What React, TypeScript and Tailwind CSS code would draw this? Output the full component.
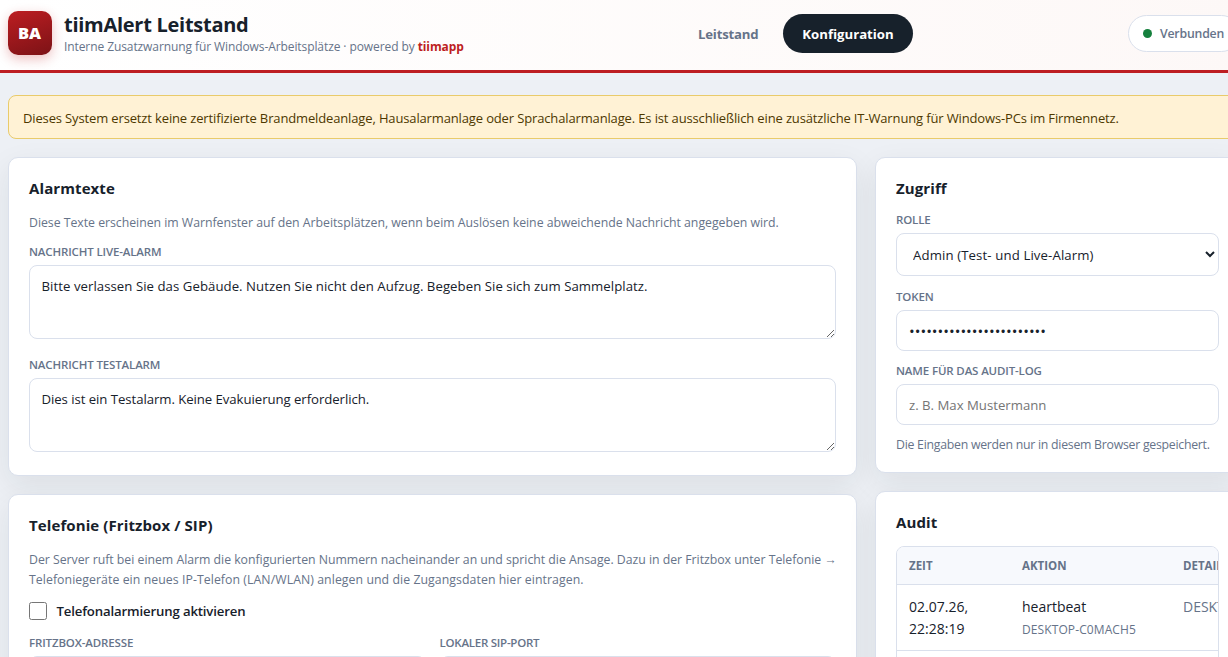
import React from 'react';
import { clsx } from 'clsx';

const FIELD = 'block w-full rounded-lg border border-[#dae0ec] bg-white text-[#17212b] outline-none';

function Card({ title, className, children }: { title: string; className?: string; children: React.ReactNode }) {
  return (
    <section
      className={clsx(
        'rounded-[10px] border border-[#dae0ec] bg-white px-5 pt-[18px] shadow-[0_10px_30px_rgba(23,33,43,0.08)]',
        className
      )}
    >
      <h2 className="h-[25px] text-[15px] leading-[24px] font-bold tracking-[0.1px] whitespace-nowrap">{title}</h2>
      {children}
    </section>
  );
}

function Label({ children, className }: { children: React.ReactNode; className?: string }) {
  return (
    <span
      className={clsx(
        'block h-[18px] text-[11.5px] leading-[17px] font-semibold tracking-[-0.14px] whitespace-nowrap text-[#667389] uppercase',
        className
      )}
    >
      {children}
    </span>
  );
}

function Header() {
  return (
    <header className="flex h-[73px] w-[1248px] items-start border-b-[3px] border-[#bd1e22] bg-linear-to-r from-white to-[#fdf8f7] pl-2">
      <div className="mt-[11px] flex size-11 items-center justify-center rounded-[10px] bg-linear-160 from-[#bd1e22] to-[#7c1216] pr-px text-[16.5px] font-extrabold text-white shadow-[0_4px_12px_rgba(189,30,34,0.28)]">
        BA
      </div>
      <div className="mt-[11px] ml-3 w-[614px] whitespace-nowrap">
        <h1 className="h-[27px] text-[20px] leading-[27px] font-bold tracking-[-0.27px]">tiimAlert Leitstand</h1>
        <p className="text-[12px] leading-[18px] tracking-[-0.09px] text-[#667389]">
          Interne Zusatzwarnung für Windows-Arbeitsplätze · powered by{' '}
          <strong className="font-bold text-[#bd1e22]">tiimapp</strong>
        </p>
      </div>
      <nav className="mt-[14px] flex h-[39px] text-[13.2px] leading-[40px] font-bold">
        <a className="w-[105px] pl-5 tracking-[-0.2px] text-[#667389]">Leitstand</a>
        <a className="w-[130px] rounded-full bg-[#17212b] text-center text-white">Konfiguration</a>
      </nav>
      <div className="mt-[15px] ml-[215px] flex h-[37px] w-28 items-center gap-2 rounded-full border border-[#dae0ec] bg-white pl-[14px] text-[12.3px] font-semibold text-[#667389]">
        <span className="size-[9px] rounded-full bg-[#15803d]" />
        <span className="pt-[2px] tracking-[-0.2px]">Verbunden</span>
      </div>
    </header>
  );
}

function AlarmTexts() {
  return (
    <Card title="Alarmtexte" className="h-[319px]">
      <p className="mt-[12px] mb-[10px] text-[12.3px] leading-[20px] tracking-[-0.03px] whitespace-nowrap text-[#667389]">
        Diese Texte erscheinen im Warnfenster auf den Arbeitsplätzen, wenn beim Auslösen keine abweichende Nachricht
        angegeben wird.
      </p>
      <Label>Nachricht Live-Alarm</Label>
      <textarea
        className={clsx(FIELD, 'mt-[4px] h-[74px] resize-y px-[11.5px] py-[9px] text-[13.2px] leading-[22px] tracking-[0.05px]')}
        defaultValue="Bitte verlassen Sie das Gebäude. Nutzen Sie nicht den Aufzug. Begeben Sie sich zum Sammelplatz."
      />
      <Label className="mt-[17px]">Nachricht Testalarm</Label>
      <textarea
        className={clsx(FIELD, 'mt-[4px] h-[74px] resize-y px-[11.5px] py-[9px] text-[13.2px] leading-[22px] tracking-[-0.06px]')}
        defaultValue="Dies ist ein Testalarm. Keine Evakuierung erforderlich."
      />
    </Card>
  );
}

function Telephony() {
  return (
    <Card title="Telefonie (Fritzbox / SIP)" className="h-[400px]">
      <p className="mt-[12px] text-[12.3px] leading-[20px] whitespace-nowrap text-[#667389]">
        <span className="tracking-[-0.025px]">
          Der Server ruft bei einem Alarm die konfigurierten Nummern nacheinander an und spricht die Ansage. Dazu in der
          Fritzbox unter Telefonie →
        </span>
        <br />
        <span className="tracking-[0.06px]">
          Telefoniegeräte ein neues IP-Telefon (LAN/WLAN) anlegen und die Zugangsdaten hier eintragen.
        </span>
      </p>
      <label className="mt-[10px] flex h-[22px] items-center gap-[9.5px] text-[13.2px] font-semibold tracking-[-0.15px]">
        <input type="checkbox" className="size-[18px]" />
        <span className="pt-[2px]">Telefonalarmierung aktivieren</span>
      </label>
      <div className="mt-[12px] grid grid-cols-2 gap-[14px]">
        <div>
          <Label>Fritzbox-Adresse</Label>
          <input className={clsx(FIELD, 'mt-[4px] h-[41px] px-3 text-[13.2px]')} />
        </div>
        <div>
          <Label className="tracking-[-0.25px]">Lokaler SIP-Port</Label>
          <input className={clsx(FIELD, 'mt-[4px] h-[41px] px-3 text-[13.2px]')} />
        </div>
      </div>
    </Card>
  );
}

function Access() {
  return (
    <Card title="Zugriff" className="h-[316px]">
      <Label className="mt-[10px]">Rolle</Label>
      <select className={clsx(FIELD, 'mt-[4px] h-[43px] px-3 text-[13.2px] tracking-[0.12px]')}>
        <option>Admin (Test- und Live-Alarm)</option>
      </select>
      <Label className="mt-[12px]">Token</Label>
      <input
        type="password"
        className={clsx(FIELD, 'mt-[4px] h-[41px] px-3 text-[15.2px]')}
        defaultValue="leitstand-admin-token-01"
      />
      <Label className="mt-[11px]">Name für das Audit-Log</Label>
      <input
        className={clsx(FIELD, 'mt-[4px] h-[41px] px-3 text-[13.2px] placeholder:text-[#757575]')}
        placeholder="z. B. Max Mustermann"
      />
      <p className="mt-[10px] text-[12.3px] leading-[20px] tracking-[-0.26px] whitespace-nowrap text-[#667389]">
        Die Eingaben werden nur in diesem Browser gespeichert.
      </p>
    </Card>
  );
}

function Audit() {
  return (
    <Card title="Audit" className="h-[400px]">
      <div className="mt-[11px] h-[300px] overflow-hidden rounded-lg border border-[#dae0ec]">
        <table className="w-[440px] table-fixed border-collapse text-left">
          <thead>
            <tr className="h-[37px] border-b border-[#dae0ec] bg-[#f7f9fd] text-[11.5px] text-[#667389]">
              <th className="w-[113px] pl-3 font-bold">ZEIT</th>
              <th className="w-[161px] pl-3 font-bold">AKTION</th>
              <th className="pl-3 font-bold">DETAILS</th>
            </tr>
          </thead>
          <tbody className="text-[14px] leading-[22px]">
            <tr className="h-[66px] border-b border-[#dae0ec] align-top">
              <td className="pt-[11px] pl-3">
                02.07.26,
                <br />
                22:28:19
              </td>
              <td className="pt-[11px] pl-3">
                heartbeat
                <div className="pt-px text-[12px] leading-[21px] tracking-[0.1px] text-[#667389]">DESKTOP-C0MACH5</div>
              </td>
              <td className="pt-[11px] pl-3 whitespace-nowrap text-[#667389]">DESKTOP-C0MACH5</td>
            </tr>
          </tbody>
        </table>
      </div>
    </Card>
  );
}

export default function App() {
  return (
    <div className="h-[657px] w-full overflow-hidden bg-[#edf0f5] font-['Open_Sans',sans-serif] text-[#17212b]">
      <Header />
      <main className="mt-[22px] ml-2 w-[1232px]">
        <div className="flex h-11 items-center rounded-lg border border-[#e9cb6b] bg-[#fff2d5] px-[14px] pt-[3px] text-[13px] tracking-[-0.14px] whitespace-nowrap text-[#4d3800]">
          Dieses System ersetzt keine zertifizierte Brandmeldeanlage, Hausalarmanlage oder Sprachalarmanlage. Es ist
          ausschließlich eine zusätzliche IT-Warnung für Windows-PCs im Firmennetz.
        </div>
        <div className="mt-[18px] grid grid-cols-[849px_365px] items-start gap-x-[18px]">
          <div className="grid grid-cols-1 gap-[18px]">
            <AlarmTexts />
            <Telephony />
          </div>
          <div className="grid grid-cols-1 gap-[18px]">
            <Access />
            <Audit />
          </div>
        </div>
      </main>
    </div>
  );
}
